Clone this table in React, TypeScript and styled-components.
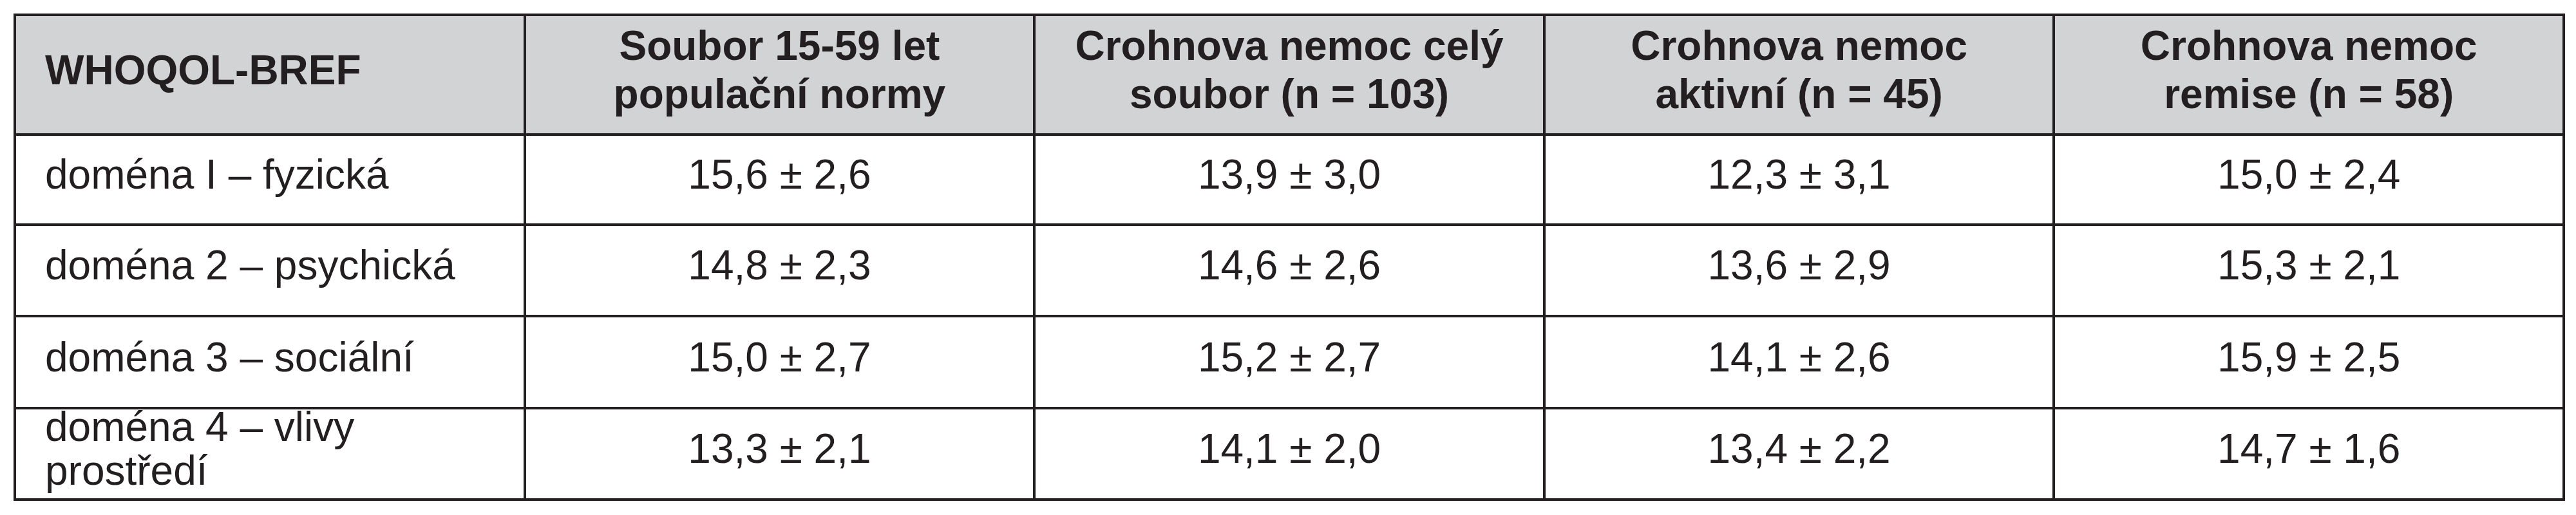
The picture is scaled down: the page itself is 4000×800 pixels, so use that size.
import React from "react";
import styled, { createGlobalStyle } from "styled-components";

const ink = "#231f20";
const headerGray = "#d1d3d4";

const GlobalStyle = createGlobalStyle`
  html, body {
    margin: 0;
    padding: 0;
    background: #ffffff;
  }
  body {
    font-family: "Liberation Sans", Arial, Helvetica, sans-serif;
    color: ${ink};
  }
`;

const Page = styled.div`
  padding: 21px;
`;

const Table = styled.div`
  width: 3962px;
  display: grid;
  grid-template-columns: repeat(5, 1fr);
  grid-template-rows: 182px 136px 138px 139px 138px;
  gap: 4px;
  padding: 4px;
  box-sizing: border-box;
  background: ${ink};
`;

const HeadCell = styled.div<{ $align?: "left" | "center" }>`
  display: flex;
  align-items: center;
  justify-content: ${(p) => (p.$align === "left" ? "flex-start" : "center")};
  text-align: ${(p) => p.$align ?? "center"};
  padding: 0 0 14px ${(p) => (p.$align === "left" ? "45px" : "0")};
  background: ${headerGray};
  font-size: 64px;
  line-height: 75px;
  font-weight: 700;
  overflow: hidden;
`;

const Cell = styled.div<{ $align?: "left" | "center" }>`
  display: flex;
  align-items: center;
  justify-content: ${(p) => (p.$align === "left" ? "flex-start" : "center")};
  text-align: ${(p) => p.$align ?? "center"};
  padding: 0 0 16px ${(p) => (p.$align === "left" ? "45px" : "0")};
  background: #ffffff;
  font-size: 64px;
  line-height: 68px;
  font-weight: 400;
`;

const headers: React.ReactNode[] = [
  "WHOQOL-BREF",
  <>Soubor 15-59 let<br />populační normy</>,
  <>Crohnova nemoc celý<br />soubor (n = 103)</>,
  <>Crohnova nemoc<br />aktivní (n = 45)</>,
  <>Crohnova nemoc<br />remise (n = 58)</>,
];

const rows: { label: React.ReactNode; values: string[] }[] = [
  {
    label: "doména I – fyzická",
    values: ["15,6 ± 2,6", "13,9 ± 3,0", "12,3 ± 3,1", "15,0 ± 2,4"],
  },
  {
    label: "doména 2 – psychická",
    values: ["14,8 ± 2,3", "14,6 ± 2,6", "13,6 ± 2,9", "15,3 ± 2,1"],
  },
  {
    label: "doména 3 – sociální",
    values: ["15,0 ± 2,7", "15,2 ± 2,7", "14,1 ± 2,6", "15,9 ± 2,5"],
  },
  {
    label: <>doména 4 – vlivy<br />prostředí</>,
    values: ["13,3 ± 2,1", "14,1 ± 2,0", "13,4 ± 2,2", "14,7 ± 1,6"],
  },
];

export default function App() {
  return (
    <>
      <GlobalStyle />
      <Page>
        <Table>
          {headers.map((h, i) => (
            <HeadCell key={`h-${i}`} $align={i === 0 ? "left" : "center"}>
              <span>{h}</span>
            </HeadCell>
          ))}
          {rows.map((row, r) => (
            <React.Fragment key={`r-${r}`}>
              <Cell $align="left">
                <span>{row.label}</span>
              </Cell>
              {row.values.map((v, c) => (
                <Cell key={`c-${r}-${c}`}>{v}</Cell>
              ))}
            </React.Fragment>
          ))}
        </Table>
      </Page>
    </>
  );
}
